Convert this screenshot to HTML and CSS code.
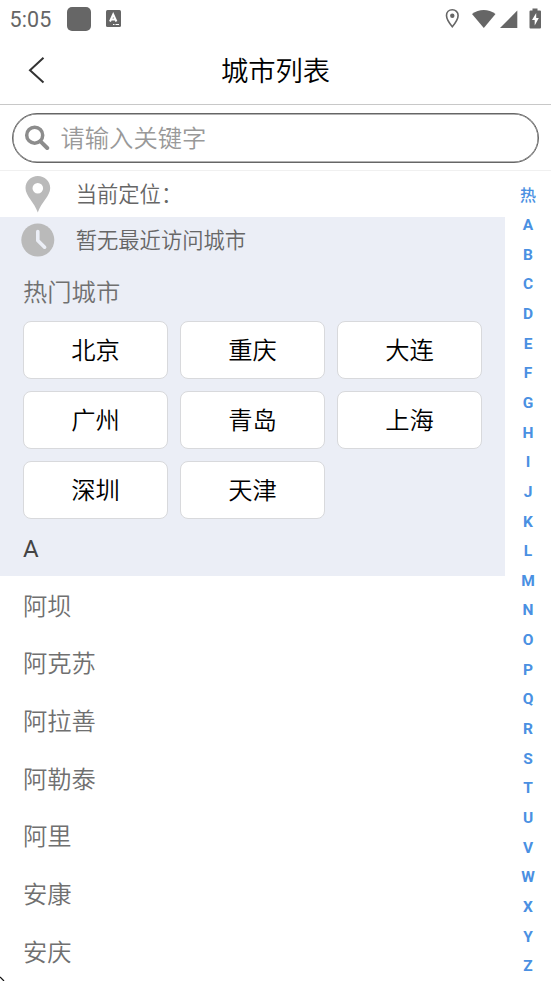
FILE: index.html
```html
<!DOCTYPE html>
<html lang="zh-CN">
<head>
<meta charset="utf-8">
<title>城市列表</title>
<link rel="stylesheet" href="styles.css">
</head>
<body>
<div class="screen">
  <div class="status">
    <span class="time">5:05</span>
    <span class="app-square"></span>
    <svg class="app-a" width="15" height="17" viewBox="0 0 15 17"><rect width="15" height="17" rx="1.5" fill="#666"/><path d="M4 11.500 7.200 4.500l3.200 7M5.200 9.500h4" fill="none" stroke="#fff" stroke-width="2"/><path d="M7 14.500h1.500M9.500 14.500H13" stroke="#fff"/></svg>
    <svg class="status-icons" width="100" height="22" viewBox="0 0 100 22" fill="#666">
      <path d="M7.300 1.700c-3.300 0-5.800 2.400-5.800 5.800 0 4.300 5.800 11.200 5.800 11.200s5.800-6.900 5.800-11.200c0-3.400-2.500-5.800-5.800-5.800z" fill="none" stroke="#666" stroke-width="1.600"/><circle cx="7.300" cy="7.700" r="2.200"/>
      <path d="M27 6c7-5.200 16.500-5.200 23.500 0L38.800 20z"/>
      <path d="M55 20 72.300 2.500V20z"/>
      <path d="M87.500 0.500h5v2h2.500q1 0 1 1v16q0 1-1 1h-9.500q-1 0-1-1v-16q0-1 1-1h2z"/><path d="m91.200 5-4.200 7h2.700v5.500l4.100-7.500h-2.600z" fill="#fff"/>
    </svg>
  </div>
  <header class="header">
    <svg class="back" width="18" height="28" viewBox="0 0 18 28"><path d="M15.500 1.800 2 14.200l13.500 12.300" fill="none" stroke="#333" stroke-width="2"/></svg>
    <h1 class="title">城市列表</h1>
  </header>
  <div class="search-bar">
    <div class="search">
      <svg class="search-icon" width="26" height="26" viewBox="0 0 26 26" fill="none" stroke="#8c8c8c"><circle cx="10.700" cy="10.200" r="8" stroke-width="3.500"/><path d="m16.500 16.300 6.700 6.700" stroke-width="4" stroke-linecap="round"/></svg>
      <span class="placeholder">请输入关键字</span>
    </div>
  </div>
  <div class="body">
    <main class="content">
      <div class="info location">
        <svg class="info-icon" width="34" height="38" viewBox="0 0 34 38"><path fill-rule="evenodd" d="M16.800 1C10 1 4.500 6.400 4.500 13c0 8 9 14.500 12.300 24.500C20 27.500 29.200 21 29.200 13 29.200 6.400 23.600 1 16.800 1zm0 7a5.300 5.300 0 1 1 0 10.600 5.300 5.300 0 0 1 0-10.600z" fill="#bababa"/></svg>
        <span>当前定位：</span>
      </div>
      <section class="panel">
        <div class="info recent">
          <svg class="info-icon" width="34" height="34" viewBox="0 0 34 34"><circle cx="16.800" cy="17" r="16.500" fill="#bababa"/><path d="M16.800 8.500v9l6.800 6.700" fill="none" stroke="#ebeef6" stroke-width="3.600" stroke-linecap="round" stroke-linejoin="round"/></svg>
          <span>暂无最近访问城市</span>
        </div>
        <h2 class="hot-title">热门城市</h2>
        <div class="hot-grid">
          <div class="city">北京</div><div class="city">重庆</div><div class="city">大连</div>
          <div class="city">广州</div><div class="city">青岛</div><div class="city">上海</div>
          <div class="city">深圳</div><div class="city">天津</div>
        </div>
        <div class="letter">A</div>
      </section>
      <ul class="list">
        <li>阿坝</li><li>阿克苏</li><li>阿拉善</li><li>阿勒泰</li><li>阿里</li><li>安康</li><li>安庆</li>
      </ul>
    </main>
    <nav class="index">
      <span class="index-hot">热</span><span>A</span><span>B</span><span>C</span><span>D</span><span>E</span><span>F</span><span>G</span><span>H</span><span>I</span><span>J</span><span>K</span><span>L</span><span>M</span><span>N</span><span>O</span><span>P</span><span>Q</span><span>R</span><span>S</span><span>T</span><span>U</span><span>V</span><span>W</span><span>X</span><span>Y</span><span>Z</span>
    </nav>
  </div>
  <svg class="corner" width="5" height="5" viewBox="0 0 5 5"><path d="M0 1 4 5" stroke="#111" stroke-width="1.200"/></svg>
</div>
</body>
</html>
```
FILE: styles.css
```css
* { box-sizing: border-box; }
body { margin: 0; background: #fff; font-family: Roboto, "Noto Sans CJK SC", sans-serif; font-weight: 350; }
.screen { position: relative; width: 551px; height: 981px; overflow: hidden; }
.status { display: flex; align-items: center; height: 37px; padding: 0 6px 0 9px; color: #666; }
.time { width: 58px; font-size: 21.500px; font-weight: 400; letter-spacing: 0.1px; line-height: 37px; padding: 1px 0 0 0.5px; }
.app-square { width: 24px; height: 24px; border-radius: 5px; background: #666; }
.app-a { margin-left: 15px; }
.status-icons { margin-left: auto; }
.header { display: grid; grid-template-columns: 60px 1fr 60px; align-items: center; height: 68px; border-bottom: 1px solid #c8c8c8; }
.back { margin: -2px 0 0 28px; }
.title { margin: 0; padding-top: 2px; text-align: center; font-size: 27.300px; line-height: 40px; font-weight: 350; color: #000; }
.search-bar { height: 66px; padding: 8px 12px 0; border-bottom: 1px solid #f0f0f0; }
.search { display: flex; align-items: center; height: 50px; padding-left: 11px; border: 1px solid #666; border-radius: 25px; box-shadow: inset 0 0 0 0.500px #666; }
.placeholder { margin-left: 10.500px; padding-top: 2px; font-size: 24.300px; line-height: 36px; color: #999; }
.body { display: flex; height: 810px; }
.content { width: 505px; }
.info { display: flex; align-items: center; height: 46px; padding-left: 21px; font-size: 21.300px; line-height: 32px; color: #666; }
.info span { padding-top: 2px; }
.info-icon { margin-right: 20.700px; }
.panel { height: 359px; background: #ebeef6; }
.hot-title { margin: 0; padding: 12px 23px 0; height: 58px; font-size: 24.300px; line-height: 36px; font-weight: 350; color: #707070; }
.hot-grid { display: grid; grid-template-columns: repeat(3, 145px); grid-auto-rows: 58px; gap: 12px; padding-left: 23px; }
.city { display: flex; align-items: center; justify-content: center; padding-bottom: 3px; border: 1px solid #d8d9dc; border-radius: 8px; background: #fff; color: #000; font-size: 24.300px; }
.letter { padding-left: 23px; height: 57px; line-height: 60px; font-size: 24px; font-weight: 400; color: #444; }
.list { margin: 0; padding: 1.700px 0 0; list-style: none; }
.list li { height: 57.700px; padding-left: 23px; font-size: 24.300px; line-height: 57.700px; color: #707070; }
.index { display: flex; flex-direction: column; flex: 1; padding-top: 9.500px; font-size: 15.500px; font-weight: 700; color: #4a90e2; text-align: center; }
.index span { flex: none; height: 29.650px; line-height: 30px; }
.index .index-hot { font-weight: 500; font-size: 16px; }
.corner { position: absolute; left: 0; bottom: 0; }
```
